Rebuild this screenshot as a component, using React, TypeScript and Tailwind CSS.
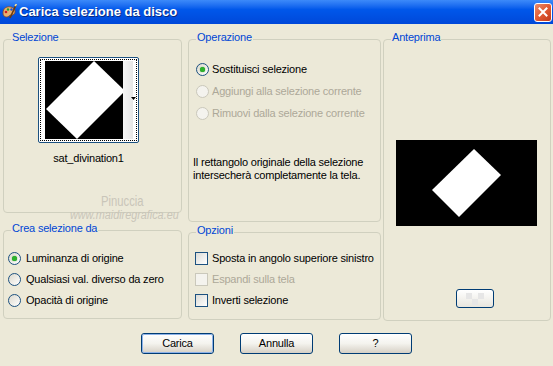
import React from "react";

function Group({ label, className, children }: { label: string; className: string; children?: React.ReactNode }) {
  return (
    <div className={`relative border border-[#D0D0BF] rounded-[4px] ${className}`}>
      <span className="absolute -top-[8px] left-[7px] px-[1px] bg-[#ECE9D8] text-[#0046D5] leading-[11px] whitespace-nowrap">
        {label}
      </span>
      {children}
    </div>
  );
}

function Radio({ checked, disabled }: { checked?: boolean; disabled?: boolean }) {
  return (
    <span
      className={
        disabled
          ? "w-[13px] h-[13px] rounded-full border border-[#CAC8BB] bg-[#F4F3EE] shrink-0 flex items-center justify-center"
          : "w-[13px] h-[13px] rounded-full border border-[#1C5180] bg-linear-to-br from-[#DCD9CD] to-[#FFFFFF] shrink-0 flex items-center justify-center"
      }
    >
      {checked && <span className="w-[5px] h-[5px] rounded-full bg-[#2DB12D] shadow-[0_0_1px_#138A13]" />}
    </span>
  );
}

function Check({ disabled }: { disabled?: boolean }) {
  return (
    <span
      className={
        disabled
          ? "w-[13px] h-[13px] border border-[#CAC8BB] bg-[#F4F3EE] shrink-0"
          : "w-[13px] h-[13px] border border-[#1C5180] bg-linear-to-br from-[#DCDCD7] to-[#FFFFFF] shrink-0"
      }
    />
  );
}

function Btn({ label, def }: { label: string; def?: boolean }) {
  return (
    <div className="w-[73px] h-[21px] rounded-[3px] border border-[#003C74] bg-linear-to-b from-[#FFFFFF] via-[#F4F3EE] to-[#D6D0C5] flex items-center justify-center">
      <div
        className={
          def
            ? "w-full h-full rounded-[2px] border border-[#8DB2E8] flex items-center justify-center leading-[13px]"
            : "w-full h-full flex items-center justify-center leading-[13px]"
        }
      >
        {label}
      </div>
    </div>
  );
}

export default function App() {
  return (
    <div className="w-[553px] h-[366px] bg-[#ECE9D8] relative overflow-hidden text-[11px] tracking-[-0.2px] text-black font-['Liberation_Sans',Arial,sans-serif]">
      {/* Title bar */}
      <div className="h-[24px] flex items-center bg-linear-to-b from-[#3C8AF9] via-[#0057EA] via-40% to-[#0048D9] pl-[2px] pr-[1px] tracking-normal">
        <svg width="15" height="16" viewBox="0 0 15 16">
          <path d="M1 9 C1 4 5 2 9 3 C13 4 14 8 12 10 C10 12 9 10 7 12 C5 14 1 13 1 9Z" fill="#E8B070" stroke="#8A4A1A" strokeWidth="0.8" />
          <circle cx="4" cy="8" r="1.3" fill="#D02020" />
          <circle cx="6" cy="5.5" r="1.2" fill="#20A030" />
          <circle cx="9.5" cy="5.5" r="1.2" fill="#2050D0" />
          <path d="M8 14 L14 1" stroke="#6B3A10" strokeWidth="1.6" />
          <path d="M13 2 L14.5 0" stroke="#F0E0A0" strokeWidth="1.6" />
        </svg>
        <span className="ml-[2px] text-white font-bold text-[13px] leading-[16px] [text-shadow:1px_1px_0_#0A2A80]">
          Carica selezione da disco
        </span>
        <div className="ml-auto w-[18px] h-[19px] rounded-[3px] border border-white bg-linear-to-br from-[#E98A6A] via-[#E15A33] to-[#C0391A] flex items-center justify-center">
          <svg width="10" height="10" viewBox="0 0 10 10">
            <path d="M1.5 1.5 L8.5 8.5 M8.5 1.5 L1.5 8.5" stroke="white" strokeWidth="2" strokeLinecap="square" />
          </svg>
        </div>
      </div>

      {/* Content */}
      <div className="flex pl-[3px] pt-[15px]">
        {/* Left column */}
        <div className="w-[179px] flex flex-col">
          <Group label="Selezione" className="h-[174px]">
            <div className="mt-[17px] ml-[34px] relative w-[101px] h-[86px] border border-[#1C5180] rounded-[2px] bg-white flex pt-[3px] pl-[6px]">
              <svg width="78" height="78" viewBox="0 0 78 78" className="shrink-0">
                <rect width="78" height="78" fill="black" />
                <polygon points="49,0 1,48 32,78 80,30" fill="white" />
              </svg>
              <div className="w-[10px] h-[78px] bg-linear-to-r from-[#F6F6F6] to-[#E6E6E6]" />
              <div className="absolute inset-[1px] border border-dotted border-black" />
              <svg width="5" height="3" viewBox="0 0 5 3" className="absolute right-[2px] top-[39px]">
                <polygon points="0,0 5,0 2.5,3" fill="black" />
              </svg>
            </div>
            <div className="ml-[34px] w-[101px] mt-[9px] text-center leading-[13px]">sat_divination1</div>
          </Group>
          <Group label="Crea selezione da" className="h-[89px] mt-[17px]">
            <div className="pt-[17px] pl-[4px] flex flex-col whitespace-nowrap">
              <div className="h-[21px] flex items-center gap-[5px]">
                <Radio checked />
                <span>Luminanza di origine</span>
              </div>
              <div className="h-[21px] flex items-center gap-[5px]">
                <Radio />
                <span>Qualsiasi val. diverso da zero</span>
              </div>
              <div className="h-[21px] flex items-center gap-[5px]">
                <Radio />
                <span>Opacità di origine</span>
              </div>
            </div>
          </Group>
        </div>

        {/* Middle column */}
        <div className="w-[193px] ml-[6px] flex flex-col">
          <Group label="Operazione" className="h-[183px]">
            <div className="pt-[18px] pl-[7px] flex flex-col whitespace-nowrap">
              <div className="h-[22px] flex items-center gap-[3px]">
                <Radio checked />
                <span>Sostituisci selezione</span>
              </div>
              <div className="h-[22px] flex items-center gap-[3px] text-[#ACA899]">
                <Radio disabled />
                <span>Aggiungi alla selezione corrente</span>
              </div>
              <div className="h-[22px] flex items-center gap-[3px] text-[#ACA899]">
                <Radio disabled />
                <span>Rimuovi dalla selezione corrente</span>
              </div>
            </div>
            <p className="mt-[32px] pl-[4px] leading-[13px] whitespace-nowrap">
              Il rettangolo originale della selezione
              <br />
              intersecherà completamente la tela.
            </p>
          </Group>
          <Group label="Opzioni" className="h-[88px] mt-[10px]">
            <div className="pt-[15px] pl-[6px] flex flex-col whitespace-nowrap">
              <div className="h-[21px] flex items-center gap-[4px]">
                <Check />
                <span>Sposta in angolo superiore sinistro</span>
              </div>
              <div className="h-[21px] flex items-center gap-[4px] text-[#ACA899]">
                <Check disabled />
                <span>Espandi sulla tela</span>
              </div>
              <div className="h-[21px] flex items-center gap-[4px]">
                <Check />
                <span>Inverti selezione</span>
              </div>
            </div>
          </Group>
        </div>

        {/* Right column */}
        <div className="w-[168px] ml-[2px]">
          <Group label="Anteprima" className="h-[282px]">
            <svg width="141" height="86" viewBox="0 0 141 86" className="mt-[100px] ml-[12px] block">
              <rect width="141" height="86" fill="black" />
              <polygon points="78,9 105,35 63,77 36,50" fill="white" />
            </svg>
            <div className="mt-[63px] ml-[72px] w-[38px] h-[19px] rounded-[3px] border border-[#003C74] bg-linear-to-b from-[#FFFFFF] to-[#E8E6DE] flex items-center justify-center">
              <svg width="18" height="12" viewBox="0 0 18 12">
                <rect x="0" y="0" width="6" height="6" fill="#E6E6E6" />
                <rect x="12" y="0" width="6" height="6" fill="#E6E6E6" />
                <rect x="6" y="6" width="6" height="6" fill="#E6E6E6" />
              </svg>
            </div>
          </Group>
        </div>
      </div>

      {/* Buttons */}
      <div className="flex justify-center gap-[26px] mt-[12px]">
        <Btn label="Carica" def />
        <Btn label="Annulla" />
        <Btn label="?" />
      </div>

      {/* Watermark */}
      <span className="absolute left-[101px] top-[193px] text-[15px] leading-[15px] tracking-normal text-[#C9C5B9] origin-left scale-x-[0.75] whitespace-nowrap">
        Pinuccia
      </span>
      <span className="absolute left-[70px] top-[209px] text-[12px] leading-[12px] tracking-normal text-[#C9C5B9] origin-left scale-x-[0.9] whitespace-nowrap italic">
        www.maidiregrafica.eu
      </span>
    </div>
  );
}
